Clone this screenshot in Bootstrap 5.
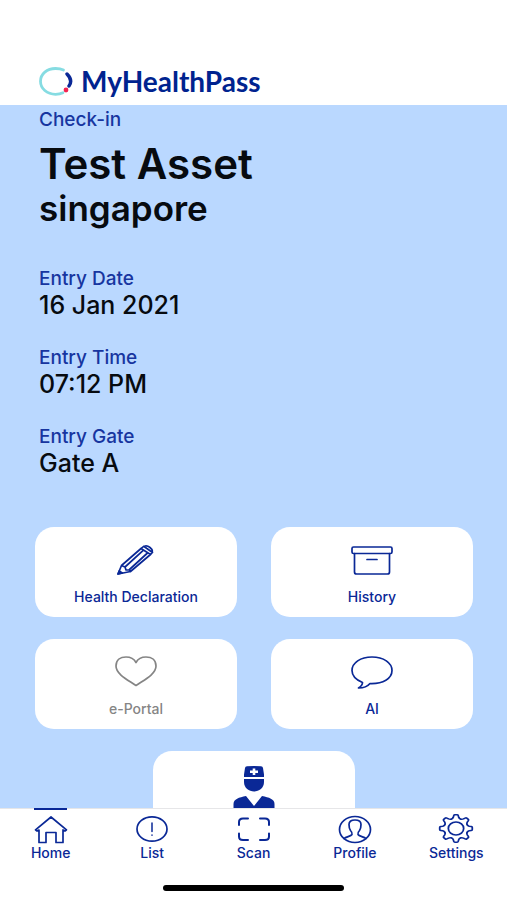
<!DOCTYPE html>
<html lang="en">
<head>
<meta charset="utf-8">
<meta name="viewport" content="width=device-width, initial-scale=1">
<title>MyHealthPass</title>
<link href="https://cdn.jsdelivr.net/npm/bootstrap@5.3.0/dist/css/bootstrap.min.css" rel="stylesheet">
<style>
  :root { --navy: #0a2896; --sky: #bad8ff; }
  body { font-family: Inter, "Liberation Sans", sans-serif; color: #070b10; }
  .topbar { padding: 66px 39px 8px; }
  .brand { font: 700 28px/31px Lato, "Open Sans", sans-serif; color: #00238f; gap: 8px; }
  .screen { background: var(--sky); min-height: 0; scrollbar-width: none; }
  .details { padding: 4px 39px 0; }
  .caption { font-size: 19px; line-height: 22px; font-weight: 500; color: #1735a0; }
  .place { font-size: 42px; line-height: 49px; font-weight: 600; margin-top: 8px; }
  .area { font-size: 35px; line-height: 41px; font-weight: 600; margin-bottom: 39px; }
  .value { font-size: 25px; line-height: 30px; font-weight: 500; margin-bottom: 27px; }
  .tiles { padding: 22px 34px 20px 35px; gap: 22px 34px; }
  .tile { flex: 0 0 calc(50% - 17px); height: 90px; border-radius: 19px; background: #fff; color: var(--navy);
    font-size: 14px; line-height: 18px; font-weight: 500; padding-top: 14px; gap: 9px; border: 0; }
  .tile:disabled { color: #858585; }
  .tabs { border-top: 1px solid #e6e6e8; }
  .tab { flex: 1 1 0; font-size: 14px; line-height: 18px; font-weight: 500; color: var(--navy); padding-top: 4px; }
  .tab.active::before { content: ""; width: 33px; height: 2px; background: var(--navy); margin: -5px 0 3px; }
  .homebar { width: 181px; height: 6px; background: #000; margin: 23px auto 9px; }
  .line { fill: none; stroke: currentColor; stroke-width: 1.7; stroke-linecap: round; stroke-linejoin: round; }
</style>
<script src="https://cdn.jsdelivr.net/npm/bootstrap@5.3.0/dist/js/bootstrap.bundle.min.js"></script>
</head>
<body class="vh-100 d-flex flex-column bg-white overflow-hidden">
<header class="topbar bg-white">
  <a href="#" class="brand d-flex align-items-center text-decoration-none">
    <svg width="34" height="29" viewBox="0 0 34 29" fill="none" stroke-linecap="round" aria-hidden="true">
      <path d="M24.5 3C21.8 1.700 19.5 1.500 16.500 1.500 8 1.500 1.500 7 1.500 14.300S8 27.300 16.500 27.300c2.800 0 5.500-.6 7.500-1.600" stroke="#86dce2" stroke-width="2.800"/>
      <path d="M28 7c4.500 4.500 4.500 8.500 2 12" stroke="#0a2896" stroke-width="3.400"/>
      <circle cx="27" cy="23" r="2.400" fill="#f32350"/>
    </svg>
    <span>MyHealthPass</span>
  </a>
</header>

<main class="screen flex-grow-1 overflow-auto">
  <section class="details">
    <div class="caption">Check-in</div>
    <h1 class="place mb-0">Test Asset</h1>
    <h2 class="area">singapore</h2>
    <dl class="mb-0">
      <dt class="caption">Entry Date</dt><dd class="value">16 Jan 2021</dd>
      <dt class="caption">Entry Time</dt><dd class="value">07:12 PM</dd>
      <dt class="caption">Entry Gate</dt><dd class="value">Gate A</dd>
    </dl>
  </section>
  <section class="tiles d-flex flex-wrap justify-content-center">
    <button type="button" class="tile d-flex flex-column align-items-center">
      <svg width="42" height="38" viewBox="0 0 42 38" class="line" aria-hidden="true">
        <path d="M3 33 6.500 24.500 26 7.500Q30.500 3 35 6.500 39.500 10 35.500 13.500L15.500 30.500ZM26 7.500 35.500 13.500M28.700 5.300 37.500 11.500M6.500 24.500 10 26 11 29 14.500 29 15.500 30.500M10 26 28.500 9.200M14.500 28.500 32.500 12"/>
        <path d="M3 33 4.200 30 7.300 32Z" fill="currentColor"/>
      </svg>
      <span>Health Declaration</span>
    </button>
    <button type="button" class="tile d-flex flex-column align-items-center">
      <svg width="42" height="38" viewBox="0 0 42 38" class="line" aria-hidden="true">
        <rect x="1" y="6" width="40" height="6.500" rx="1.500"/>
        <path d="M3.500 12.500V31Q3.500 33 5.500 33h31Q38.500 33 38.500 31V12.500M16 18.500H26"/>
      </svg>
      <span>History</span>
    </button>
    <button type="button" class="tile d-flex flex-column align-items-center" disabled>
      <svg width="42" height="38" viewBox="0 0 42 38" class="line" aria-hidden="true">
        <path d="M21 32.500C14 27.500 1 21.500 1 13 1 7 5.500 4 11 4c4.500 0 8 1.800 10 5.500C23 5.800 26.500 4 31 4c5.500 0 10 3 10 9 0 8.500-13 14.500-20 19.500Z"/>
      </svg>
      <span>e-Portal</span>
    </button>
    <button type="button" class="tile d-flex flex-column align-items-center">
      <svg width="42" height="38" viewBox="0 0 42 38" class="line" aria-hidden="true">
        <path d="M21 4C9.500 4 1 9.800 1 17.500 1 23 5.500 27 11.500 29.500 11.500 32 10 33.500 7.500 35 13 35 17 33 19 30.500 32 31 41 25.500 41 17.500 41 9.800 32.500 4 21 4Z"/>
      </svg>
      <span>AI</span>
    </button>
    <button type="button" class="tile d-flex flex-column align-items-center" aria-label="Doctor">
      <svg width="42" height="44" viewBox="0 0 42 44" fill="currentColor" aria-hidden="true">
        <path d="M11 12V9.500L12 3Q12.200 1.500 14 1.300 21 .5 28 1.300 29.800 1.500 30 3L31 9.500V12Z"/>
        <path d="M11 14H31V17C31 23 26 26.500 21 26.500S11 23 11 17Z"/>
        <path d="M.5 44V39C.5 34 6 32.500 13 31L21 41 29 31C36 32.500 41.500 34 41.500 39V44Z"/>
        <path d="M19.700 3.500h2.600v2h2.700v2.600h-2.700v2h-2.600v-2H17V5.500h2.700Z" fill="#fff"/>
      </svg>
    </button>
  </section>
</main>

<footer class="bg-white">
  <nav class="tabs d-flex" aria-label="Main">
    <a href="#" class="tab active d-flex flex-column align-items-center text-decoration-none" aria-current="page">
      <svg width="36" height="31" viewBox="0 0 36 31" class="line" aria-hidden="true">
        <path d="M6 17 4 18 2.500 16.800 18 4 33.500 16.800 32 18 30 17V29.500H23V19.500H13V29.500H6Z"/>
      </svg>
      <span>Home</span>
    </a>
    <a href="#" class="tab d-flex flex-column align-items-center text-decoration-none">
      <svg width="36" height="31" viewBox="0 0 36 31" class="line" aria-hidden="true">
        <ellipse cx="18" cy="16" rx="15" ry="12.200"/><path d="M18 10V18.500M18 22v.2" stroke-width="1.500"/>
      </svg>
      <span>List</span>
    </a>
    <a href="#" class="tab d-flex flex-column align-items-center text-decoration-none">
      <svg width="36" height="31" viewBox="0 0 36 31" class="line" aria-hidden="true">
        <path stroke-width="2" d="M3 12V9Q3 5.500 7 5.500h5M24 5.500h5q4 0 4 3.500v3M33 20.500v3q0 3.500-4 3.500h-5M12 27H7q-4 0-4-3.500v-3"/>
      </svg>
      <span>Scan</span>
    </a>
    <a href="#" class="tab d-flex flex-column align-items-center text-decoration-none">
      <svg width="36" height="31" viewBox="0 0 36 31" class="line" aria-hidden="true">
        <ellipse cx="18" cy="16.500" rx="15.500" ry="13"/>
        <path d="M7 25.500C9 23.500 14 23.500 15 21.500 15.500 20 14.500 18.500 13.500 17.500 12 15.500 12 14 12 11.500 12 8.500 14.500 7 18 7s6 1.500 6 4.500c0 2.500 0 4-1.500 6-1 1-2 2.500-1.500 4 1 2 6 2 8 4"/>
      </svg>
      <span>Profile</span>
    </a>
    <a href="#" class="tab d-flex flex-column align-items-center text-decoration-none">
      <svg width="36" height="31" viewBox="0 0 36 31" class="line" aria-hidden="true">
        <defs><path id="tooth" d="M-3.900-9.420Q-2.700-9.900-2.300-11.200L-1.900-12.900Q-1.700-13.800-.9-13.800H.9Q1.700-13.800 1.900-12.900L2.300-11.200Q2.700-9.900 3.900-9.420"/></defs>
        <g transform="translate(18 15.500) scale(1.180 1)" stroke-width="1.500">
          <use href="#tooth"/><use href="#tooth" transform="rotate(45)"/><use href="#tooth" transform="rotate(90)"/><use href="#tooth" transform="rotate(135)"/>
          <use href="#tooth" transform="rotate(180)"/><use href="#tooth" transform="rotate(225)"/><use href="#tooth" transform="rotate(270)"/><use href="#tooth" transform="rotate(315)"/>
          <circle r="6.500"/>
        </g>
      </svg>
      <span>Settings</span>
    </a>
  </nav>
  <div class="homebar rounded-pill"></div>
</footer>
</body>
</html>
